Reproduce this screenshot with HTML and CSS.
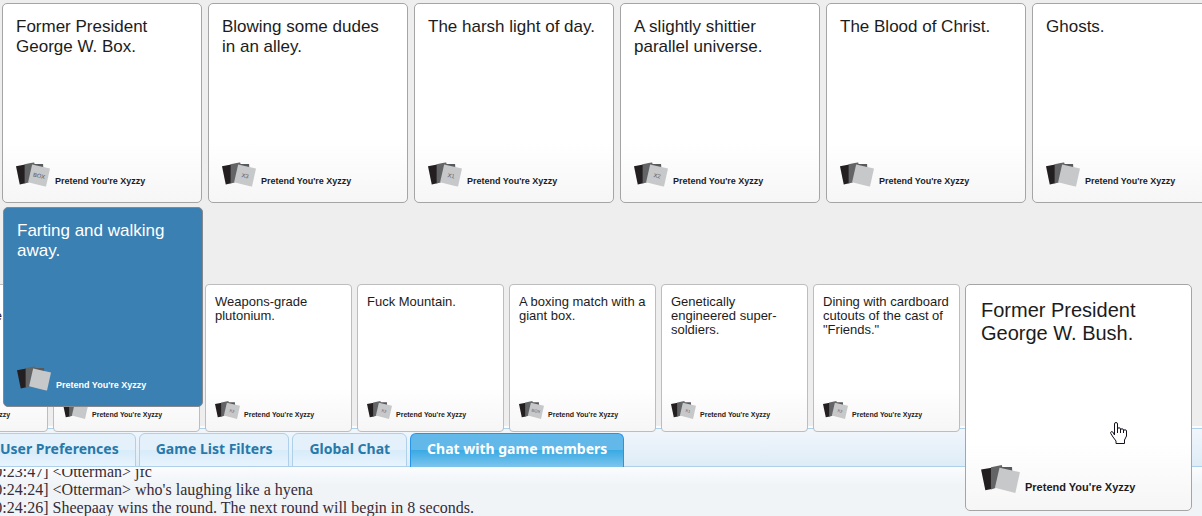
FILE: index.html
```html
<!DOCTYPE html>
<html lang="en">

<head>
    <meta charset="UTF-8">
    <meta name="viewport" content="width=device-width, initial-scale=1.0">
    <title>Pretend You're Xyzzy</title>
    <link rel="stylesheet" href="styles.css">
</head>

<body>
    <!-- shared logo, used by every card -->
    <svg class="sprite" aria-hidden="true">
        <symbol id="logo" viewBox="0 0 118 85">
            <polygon points="0,14 32,8 32,73 13,77" fill="#231f20" />
            <polygon points="60,6 94,6 95,22 60,22" fill="#58595b" />
            <polygon points="30,7 63,0 68,22 44,70 30,74" fill="#636466" />
            <polygon points="56,8 118,22 104,85 42,69" fill="#c7c8ca" />
        </symbol>
    </svg>

    <main class="game">
        <div class="round">
            <div class="card">
                <p>Former President George W. Box.</p>
                <div class="brand">
                    <svg class="logo" viewBox="0 0 118 85"><use href="#logo" /><text x="80" y="54" transform="rotate(13 80 47)">BOX</text></svg>
                    <span>Pretend You're Xyzzy</span>
                </div>
            </div>
            <div class="card">
                <p>Blowing some dudes in an alley.</p>
                <div class="brand">
                    <svg class="logo" viewBox="0 0 118 85"><use href="#logo" /><text x="80" y="54" transform="rotate(13 80 47)">X3</text></svg>
                    <span>Pretend You're Xyzzy</span>
                </div>
            </div>
            <div class="card">
                <p>The harsh light of day.</p>
                <div class="brand">
                    <svg class="logo" viewBox="0 0 118 85"><use href="#logo" /><text x="80" y="54" transform="rotate(13 80 47)">X1</text></svg>
                    <span>Pretend You're Xyzzy</span>
                </div>
            </div>
            <div class="card">
                <p>A slightly shittier parallel universe.</p>
                <div class="brand">
                    <svg class="logo" viewBox="0 0 118 85"><use href="#logo" /><text x="80" y="54" transform="rotate(13 80 47)">X2</text></svg>
                    <span>Pretend You're Xyzzy</span>
                </div>
            </div>
            <div class="card">
                <p>The Blood of Christ.</p>
                <div class="brand">
                    <svg class="logo" viewBox="0 0 118 85"><use href="#logo" /></svg>
                    <span>Pretend You're Xyzzy</span>
                </div>
            </div>
            <div class="card">
                <p>Ghosts.</p>
                <div class="brand">
                    <svg class="logo" viewBox="0 0 118 85"><use href="#logo" /></svg>
                    <span>Pretend You're Xyzzy</span>
                </div>
            </div>
        </div>
        <div class="round winner">
            <div class="card selected">
                <p>Farting and walking away.</p>
                <div class="brand">
                    <svg class="logo" viewBox="0 0 118 85"><use href="#logo" /></svg>
                    <span>Pretend You're Xyzzy</span>
                </div>
            </div>
        </div>

        <div class="hand">
            <div class="card small">
                <p>A live<br>studio audience.</p>
                <div class="brand">
                    <svg class="logo" viewBox="0 0 118 85"><use href="#logo" /></svg>
                    <span>Pretend You're Xyzzy</span>
                </div>
            </div>
            <div class="card small">
                <p></p>
                <div class="brand">
                    <svg class="logo" viewBox="0 0 118 85"><use href="#logo" /></svg>
                    <span>Pretend You're Xyzzy</span>
                </div>
            </div>
            <div class="card small">
                <p>Weapons-grade plutonium.</p>
                <div class="brand">
                    <svg class="logo" viewBox="0 0 118 85"><use href="#logo" /><text x="80" y="54" transform="rotate(13 80 47)">X2</text></svg>
                    <span>Pretend You're Xyzzy</span>
                </div>
            </div>
            <div class="card small">
                <p>Fuck Mountain.</p>
                <div class="brand">
                    <svg class="logo" viewBox="0 0 118 85"><use href="#logo" /><text x="80" y="54" transform="rotate(13 80 47)">X2</text></svg>
                    <span>Pretend You're Xyzzy</span>
                </div>
            </div>
            <div class="card small">
                <p>A boxing match with a giant box.</p>
                <div class="brand">
                    <svg class="logo" viewBox="0 0 118 85"><use href="#logo" /><text x="80" y="54" transform="rotate(13 80 47)">BOX</text></svg>
                    <span>Pretend You're Xyzzy</span>
                </div>
            </div>
            <div class="card small">
                <p>Genetically engineered super-soldiers.</p>
                <div class="brand">
                    <svg class="logo" viewBox="0 0 118 85"><use href="#logo" /><text x="80" y="54" transform="rotate(13 80 47)">X1</text></svg>
                    <span>Pretend You're Xyzzy</span>
                </div>
            </div>
            <div class="card small">
                <p>Dining with cardboard cutouts of the cast of "Friends."</p>
                <div class="brand">
                    <svg class="logo" viewBox="0 0 118 85"><use href="#logo" /><text x="80" y="54" transform="rotate(13 80 47)">X2</text></svg>
                    <span>Pretend You're Xyzzy</span>
                </div>
            </div>
            <div class="slot">
                <div class="card large">
                    <p>Former President George W. Bush.</p>
                    <div class="brand">
                        <svg class="logo" viewBox="0 0 118 85"><use href="#logo" /></svg>
                        <span>Pretend You're Xyzzy</span>
                    </div>
                    <svg class="pointer" viewBox="0 0 17 22" aria-hidden="true">
                        <path d="M4.5 13V2a1.5 1.5 0 0 1 3 0v5a1.5 1.2 0 0 1 3 0v1a1.5 1.2 0 0 1 3 0v1a1.5 1.2 0 0 1 3 0v5l-2 4v3.5h-8.500V19L3 15 .8 11.500c-.8-1.500 1-2.500 2-1.500z" />
                        <path d="M7.5 7v4M10.5 7v4M13.5 8v3" />
                    </svg>
                </div>
            </div>
        </div>
    </main>

    <section class="chat">
        <nav class="tabs">
            <a href="#preferences">User Preferences</a>
            <a href="#filters">Game List Filters</a>
            <a href="#global">Global Chat</a>
            <a href="#members" class="active">Chat with game members</a>
        </nav>
        <div class="log">
            <div>[20:23:47] &lt;Otterman&gt; jfc</div>
            <div>[20:24:24] &lt;Otterman&gt; who's laughing like a hyena</div>
            <div>[20:24:26] Sheepaay wins the round. The next round will begin in 8 seconds.</div>
        </div>
    </section>
</body>

</html>
```
FILE: styles.css
```css
body {
    margin: 0;
    background-color: #eee;
    color: #362b36;
    font-family: "Liberation Serif", serif;
    font-size: 16px;
    overflow: hidden;
}

.sprite {
    display: none;
}

.game {
    position: relative;
    z-index: 1;
    padding-top: 3px;
}

.round {
    display: flex;
    gap: 6px;
    padding: 0 2px 4px;
}

.winner {
    position: relative;
    z-index: 2;
    padding: 0 3px;
}

/* cards */
.card {
    display: flex;
    flex: none;
    flex-direction: column;
    justify-content: space-between;
    box-sizing: border-box;
    width: 200px;
    height: 200px;
    padding: 13px 13px 15px;
    border: 1px solid #a5a5a5;
    border-radius: 5px;
    background: linear-gradient(#fff 70%, #f6f6f6);
    color: #1c1c1c;
    font-family: "Liberation Sans", Arial, sans-serif;
    font-size: 17px;
    line-height: 20px;
}

.card p {
    margin: 0;
}

.brand {
    display: flex;
    align-items: flex-end;
    gap: 5px;
    font-size: 9px;
    font-weight: bold;
    line-height: 12px;
    white-space: nowrap;
}

.logo {
    flex: none;
    width: 34px;
    height: 25px;
}

.logo text {
    fill: #555a66;
    font-size: 20px;
    font-weight: normal;
    text-anchor: middle;
}

.selected {
    border-color: #85888c;
    background: #3b80b2;
    color: #fff;
}

/* the hand is scrolled to the left and slides under the winning card */
.hand {
    display: flex;
    gap: 5px;
    margin: -123px 0 0 -99px;
}

.small {
    width: 147px;
    height: 148px;
    padding: 10px 9px 12px;
    border-color: #bdbdbd;
    border-radius: 4px;
    font-size: 13px;
    line-height: 14px;
}

.small .brand {
    gap: 4px;
    font-size: 7px;
    line-height: 8px;
}

.small .logo {
    width: 25px;
    height: 18px;
}

.slot {
    position: relative;
    flex: none;
    width: 147px;
}

.large {
    position: absolute;
    top: 0;
    left: 0;
    width: 227px;
    height: 227px;
    padding: 14px 15px 17px;
    font-size: 20px;
    line-height: 23px;
}

.large .brand {
    font-size: 11px;
}

.large .logo {
    width: 39px;
    height: 28px;
}

.pointer {
    position: absolute;
    top: 137px;
    left: 144px;
    width: 17px;
    height: 22px;
    fill: #fff;
    stroke: #11111f;
    stroke-width: 1;
}

/* chat */
.chat {
    margin-top: -6px;
    padding-top: 2px;
    background: linear-gradient(#fafcfe 41px, #f0f4f7 60px);
}

.tabs {
    display: flex;
    gap: 3px;
    padding: 4px 0 0;
    border: 1px solid #aed0ea;
    border-width: 1px 0;
    background: linear-gradient(#f1f6fc, #deecf7);
}

.tabs a {
    margin-bottom: -1px;
    padding: 0 16px 2px;
    border: 1px solid #aed0ea;
    border-radius: 6px 6px 0 0;
    background: linear-gradient(#e4f1fb 50%, #d7ebf9 50%, #e8f4fd);
    color: #2779aa;
    font-family: "Noto Sans", sans-serif;
    font-size: 14px;
    font-weight: bold;
    line-height: 30px;
    text-decoration: none;
    white-space: nowrap;
}

.tabs a:first-child {
    margin-left: -17px;
}

.tabs a.active {
    border-color: #2694e8;
    border-bottom: 0;
    background: linear-gradient(#62b8e9 50%, #3baae3 50%, #7cc5ed);
    color: #fff;
}

.log {
    display: flex;
    flex-direction: column;
    justify-content: flex-end;
    height: 48px;
    margin: 2px 0 0 -19px;
    line-height: 18px;
    white-space: nowrap;
    overflow: hidden;
}
```
